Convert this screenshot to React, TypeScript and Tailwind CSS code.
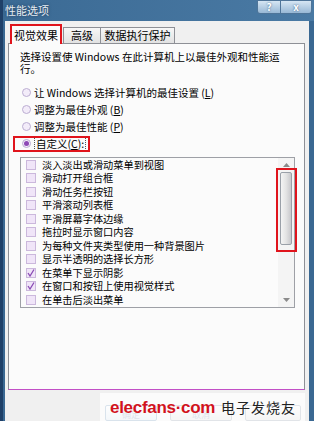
import React from 'react';

const items = [
  { label: '淡入淡出或滑动菜单到视图', on: false },
  { label: '滑动打开组合框', on: false },
  { label: '滑动任务栏按钮', on: false },
  { label: '平滑滚动列表框', on: false },
  { label: '平滑屏幕字体边缘', on: false },
  { label: '拖拉时显示窗口内容', on: false },
  { label: '为每种文件夹类型使用一种背景图片', on: false },
  { label: '显示半透明的选择长方形', on: false },
  { label: '在菜单下显示阴影', on: true },
  { label: '在窗口和按钮上使用视觉样式', on: true },
  { label: '在单击后淡出菜单', on: false },
];

const Radio = ({ on }: { on?: boolean }) => (
  <span className="w-[9px] h-[9px] rounded-full border border-[#bcaed2] bg-[#f3ecf9] flex items-center justify-center shrink-0">
    {on && <span className="w-[5px] h-[5px] rounded-full bg-[#8d48b5]" />}
  </span>
);

const Check = ({ on }: { on?: boolean }) => (
  <span className="w-[10px] h-[10px] border border-[#cbb8dc] bg-[#f0e5f8] flex items-center justify-center shrink-0">
    {on && (
      <svg width="8" height="8" viewBox="0 0 8 8">
        <path d="M1 4 L3 7 L7 0.5" fill="none" stroke="#8a4cb4" strokeWidth="1.3" />
      </svg>
    )}
  </span>
);

export default function App() {
  return (
    <div className="w-[314px] h-[421px] bg-[#3a6892] border-l-[3px] border-[#1f4068] flex flex-col overflow-hidden font-[family-name:'Noto_Sans_CJK_SC',sans-serif] text-black">
      {/* Title bar */}
      <div className="h-[21px] shrink-0 flex items-start justify-between bg-gradient-to-r from-[#3b6a94] to-[#4a7aa4]">
        <span className="ml-[2px] mt-[3px] text-[11px] leading-[14px] text-[#e6edf3] [text-shadow:0_0_3px_#1c3550]">性能选项</span>
        <div className="flex mr-[2px]">
          <div className="w-[24px] h-[14px] border border-[#4f7599] rounded-bl-[3px] bg-gradient-to-b from-[#d6e6f3] to-[#98b8d5] flex items-center justify-center text-[10px] font-bold leading-none text-white [text-shadow:0_0_2px_#355a7e]">?</div>
          <div className="w-[31px] h-[14px] border border-l-0 border-[#4f7599] rounded-br-[3px] bg-gradient-to-b from-[#d6e6f3] to-[#98b8d5] flex items-center justify-center text-[10px] font-bold leading-none text-white [text-shadow:0_0_2px_#355a7e]">x</div>
        </div>
      </div>

      {/* Body */}
      <div className="flex-1 mr-[5px] ml-[2px] mb-[4px] bg-[#f0f0f0] flex flex-col pl-[3px] pr-[4px] relative">
        {/* Tabs */}
        <div className="h-[22px] shrink-0 flex items-end pl-[2px] text-[11px] leading-none">
          <div className="w-[52px] h-[20px] -mb-px relative z-10 border-2 border-[#e0141c] border-b-0 bg-[#fbfbfb] flex items-center justify-center">视觉效果</div>
          <div className="w-[38px] h-[16px] ml-px border border-b-0 border-[#8e9096] bg-gradient-to-b from-[#f7f7f7] to-[#e2e2e2] flex items-center justify-center">高级</div>
          <div className="w-[74px] h-[16px] border border-l-0 border-b-0 border-[#8e9096] bg-gradient-to-b from-[#f7f7f7] to-[#e2e2e2] flex items-center justify-center">数据执行保护</div>
        </div>

        {/* Panel */}
        <div className="h-[347px] shrink-0 border border-[#8e9096] border-b-[#c24fc6] bg-[#fbfbfb] pl-[11px] pr-[9px] pt-[7px] flex flex-col">
          <div className="flex flex-col text-[10.5px] leading-[12px] whitespace-nowrap">
            <span>选择设置使 Windows 在此计算机上以最佳外观和性能运</span>
            <span>行。</span>
          </div>

          <div className="mt-[9px] flex flex-col text-[10.5px]">
            <div className="h-[17px] flex items-center gap-[3px] pl-[2px]">
              <Radio />
              <span>让 Windows 选择计算机的最佳设置 (<u>L</u>)</span>
            </div>
            <div className="h-[17px] flex items-center gap-[3px] pl-[2px]">
              <Radio />
              <span>调整为最佳外观 (<u>B</u>)</span>
            </div>
            <div className="h-[17px] flex items-center gap-[3px] pl-[2px]">
              <Radio />
              <span>调整为最佳性能 (<u>P</u>)</span>
            </div>
            <div className="h-[17px] flex items-center gap-[3px] pl-[2px] relative">
              <Radio on />
              <span className="border border-dotted border-[#555] px-px leading-[12px]">自定义(<u>C</u>):</span>
              <span className="absolute left-[-7px] top-px w-[77px] h-[16px] border-2 border-[#e0141c]" />
            </div>
          </div>

          {/* List */}
          <div className="mt-[5px] h-[151px] border border-[#9ea0a6] bg-[#fbfbfb] flex">
            <div className="flex-1 flex flex-col pl-[5px] text-[10.2px]">
              {items.map((it) => (
                <div key={it.label} className="h-[13.5px] flex items-center gap-[6px] whitespace-nowrap">
                  <Check on={it.on} />
                  <span className="leading-none">{it.label}</span>
                </div>
              ))}
            </div>
            <div className="w-[16px] flex flex-col bg-[#f4f4f4] relative">
              <div className="h-[14px] flex items-center justify-center">
                <svg width="7" height="4" viewBox="0 0 7 4"><path d="M0 4 L3.5 0 L7 4 Z" fill="#8a8a8a" /></svg>
              </div>
              <div className="h-[73px] mx-[2px] rounded-[2px] border border-[#9aa0a8] bg-gradient-to-r from-[#f4f4f4] via-[#e4e4e4] to-[#c8c8cc]" />
              <div className="flex-1" />
              <div className="h-[14px] flex items-center justify-center">
                <svg width="7" height="4" viewBox="0 0 7 4"><path d="M0 0 L7 0 L3.5 4 Z" fill="#8a8a8a" /></svg>
              </div>
              <span className="absolute left-[-2px] top-[10px] w-[21px] h-[84px] border-2 border-[#e0141c]" />
            </div>
          </div>
        </div>

        {/* Buttons */}
        <div className="flex-1 flex items-start pl-[97px] pt-[15px] gap-[13px] text-[9px] text-[#8fa2b8]">
          <div className="w-[52px] h-[16px] border border-[#7fa0c0] rounded-[2px] bg-gradient-to-b from-[#f6f9fc] to-[#d8e4ee] flex items-start justify-center pt-[4px] leading-none">确定</div>
          <div className="w-[62px] h-[16px] border border-[#9aa6b2] rounded-[2px] bg-gradient-to-b from-[#f6f6f6] to-[#dedede] flex items-start justify-center pt-[4px] leading-none">取消</div>
          <div className="w-[56px] h-[16px] border border-[#9aa6b2] rounded-[2px] bg-gradient-to-b from-[#f6f6f6] to-[#dedede]" />
        </div>

        {/* Watermark */}
        <div className="absolute left-[95px] bottom-0 w-[205px] h-[28px] bg-white/70 flex items-center">
          <span className="ml-[10px] font-[family-name:'Liberation_Sans',sans-serif] font-bold text-[17px] leading-none text-[#d2121c] tracking-[-0.3px]">elecfans·com</span>
          <span className="ml-[6px] text-[14px] leading-none text-[#222] tracking-[1px]">电子发烧友</span>
        </div>
      </div>
    </div>
  );
}
